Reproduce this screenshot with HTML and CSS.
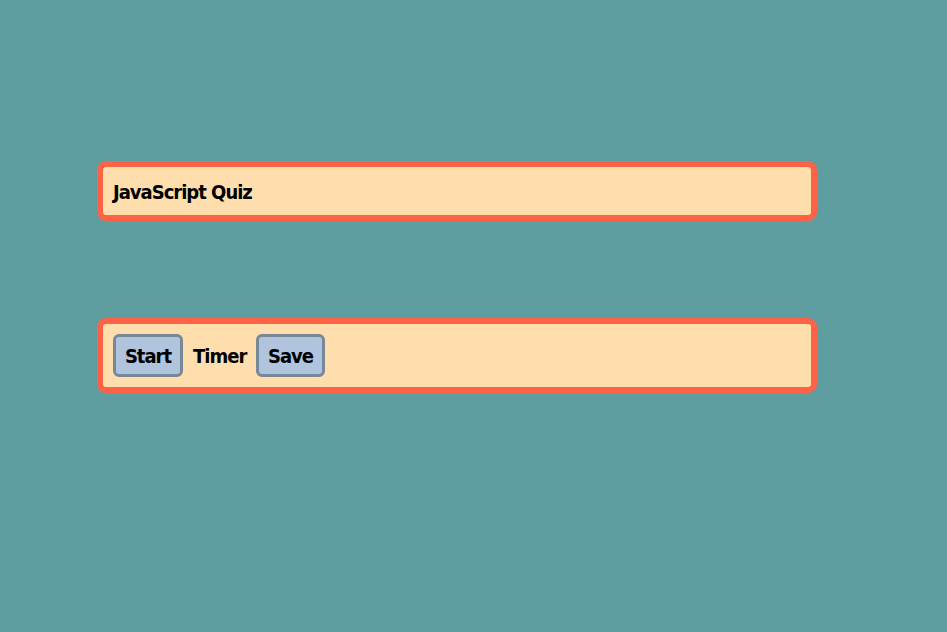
FILE: index.html
```html
<!DOCTYPE html>
<html lang="en">
<head>
<meta charset="utf-8">
<title>JavaScript Quiz</title>
<link rel="stylesheet" href="styles.css">
</head>
<body>
<header class="panel title-panel">
  <h1 class="title">JavaScript Quiz</h1>
</header>
<section class="panel controls">
  <button class="btn btn-start" type="button">Start</button>
  <span class="timer">Timer</span>
  <button class="btn btn-save" type="button">Save</button>
</section>
</body>
</html>
```
FILE: styles.css
```css
html, body {
  margin: 0;
  padding: 0;
}
body {
  background: #5f9ea0;
  font-family: Impact, "DejaVu Sans Condensed", "DejaVu Sans", sans-serif;
  font-stretch: condensed;
  font-weight: bold;
  color: #000;
  padding: 161px 0 0 97px;
  width: 720px;
}
.panel {
  box-sizing: border-box;
  width: 720px;
  background: #ffdead;
  border: 6px solid #ff6347;
  border-radius: 9px;
}
.title-panel {
  height: 60px;
  padding: 0 10px;
  display: flex;
  align-items: center;
}
.title {
  margin: 0;
  font-size: 20px;
  font-weight: bold;
  letter-spacing: -1px;
  padding-top: 2px;
}
.controls {
  margin-top: 97px;
  height: 75px;
  padding: 10px;
  display: flex;
  align-items: center;
  gap: 10px;
}
.btn {
  box-sizing: border-box;
  height: 43px;
  padding: 0;
  background: #b0c4de;
  border: 3px solid #778899;
  border-radius: 6px;
  font: inherit;
  font-size: 20px;
  letter-spacing: -1px;
  color: #000;
}
.btn-start {
  width: 70px;
}
.btn-save {
  width: 69px;
}
.timer {
  font-size: 20px;
  letter-spacing: -1px;
  width: 53px;
  white-space: nowrap;
  text-align: center;
}
```
